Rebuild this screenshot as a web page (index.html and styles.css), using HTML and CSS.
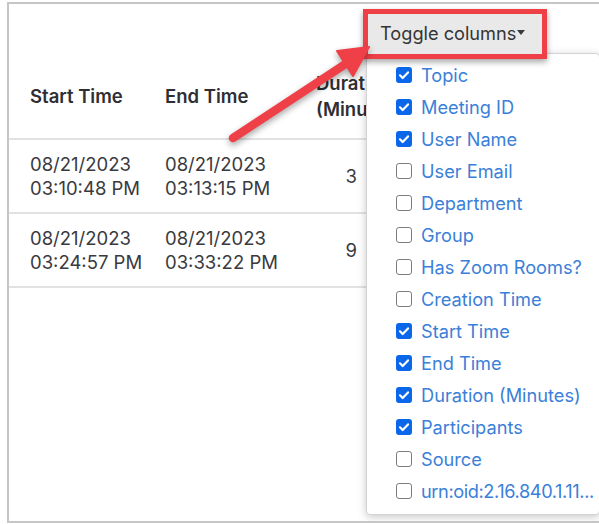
FILE: index.html
```html
<!DOCTYPE html>
<html lang="en">
<head>
<meta charset="utf-8">
<title>Meeting report</title>
<link rel="stylesheet" href="styles.css">
</head>
<body>
<div class="frame">
  <div class="toolbar">
    <div class="colmenu">
      <div class="callout">
        <button class="toggle" type="button">Toggle columns<span class="caret"></span></button>
      </div>
      <ul class="menu">
        <li><span class="box on"></span>Topic</li>
        <li><span class="box on"></span>Meeting ID</li>
        <li><span class="box on"></span>User Name</li>
        <li><span class="box"></span>User Email</li>
        <li><span class="box"></span>Department</li>
        <li><span class="box"></span>Group</li>
        <li><span class="box"></span>Has Zoom Rooms?</li>
        <li><span class="box"></span>Creation Time</li>
        <li><span class="box on"></span>Start Time</li>
        <li><span class="box on"></span>End Time</li>
        <li><span class="box on"></span>Duration (Minutes)</li>
        <li><span class="box on"></span>Participants</li>
        <li><span class="box"></span>Source</li>
        <li class="long"><span class="box"></span>urn:oid:2.16.840.1.11...</li>
      </ul>
    </div>
  </div>
  <table class="report">
    <colgroup>
      <col class="w-start">
      <col class="w-end">
      <col class="w-dur">
      <col>
    </colgroup>
    <thead>
      <tr>
        <th class="first">Start Time</th>
        <th>End Time</th>
        <th class="dur">Duration<br>(Minutes)</th>
        <th></th>
      </tr>
    </thead>
    <tbody>
      <tr>
        <td class="first">08/21/2023<br>03:10:48 PM</td>
        <td>08/21/2023<br>03:13:15 PM</td>
        <td class="num">3</td>
        <td></td>
      </tr>
      <tr>
        <td class="first">08/21/2023<br>03:24:57 PM</td>
        <td>08/21/2023<br>03:33:22 PM</td>
        <td class="num">9</td>
        <td></td>
      </tr>
    </tbody>
  </table>
  <!-- annotation arrow pointing at the toggle button -->
  <svg class="pointer" width="599" height="524" viewBox="0 0 599 524" aria-hidden="true">
    <line x1="233" y1="138" x2="350" y2="61" stroke="#ef3f47" stroke-width="8.5" stroke-linecap="round"/>
    <polygon points="369,47 337,51 353,76" fill="#ef3f47" stroke="#ef3f47" stroke-width="2" stroke-linejoin="round"/>
  </svg>
</div>
</body>
</html>
```

FILE: styles.css
```css
html, body {
  margin: 0;
  padding: 0;
  background: #ffffff;
}

body {
  width: 599px;
  height: 524px;
  overflow: hidden;
  font-family: Inter, "Liberation Sans", Arial, sans-serif;
  color: #3a3a3e;
}

.frame {
  position: relative;
  margin: 2px 0 0 7px;
  width: 592px;
  height: 521px;
  box-sizing: border-box;
  border: 2px solid #c6c6c6;
  border-right: none;
  overflow: hidden;
}

/* toolbar with the column toggle */
.toolbar {
  height: 49px;
  padding-top: 5px;
  box-sizing: border-box;
  display: flex;
  padding-left: 354px;
}

.colmenu {
  position: relative;
  z-index: 3;
}

.callout {
  position: relative;
  z-index: 2;
  border: 5px solid #ef3f47;
  box-shadow: 0 3px 6px rgba(0, 0, 0, 0.35);
}

.toggle {
  display: flex;
  align-items: center;
  width: 174px;
  height: 40px;
  margin: 0;
  padding: 0 0 3px 12px;
  box-sizing: border-box;
  border: none;
  background: #e9e9e9;
  font-family: inherit;
  font-size: 18.2px;
  color: #343434;
  cursor: pointer;
}

.caret {
  display: inline-block;
  margin-left: 1px;
  width: 0;
  height: 0;
  border-left: 4.5px solid transparent;
  border-right: 4.5px solid transparent;
  border-top: 5px solid #3a3a3a;
}

/* dropdown with column checkboxes */
.menu {
  position: absolute;
  z-index: 1;
  top: 44px;
  left: 3px;
  width: 234px;
  height: 462px;
  box-sizing: border-box;
  margin: 0;
  padding: 5px 0 9px 29px;
  list-style: none;
  background: #ffffff;
  border: 1px solid #d4d4d4;
  border-radius: 4px;
  box-shadow: 0 2px 8px rgba(0, 0, 0, 0.22);
}

.menu li {
  display: flex;
  align-items: center;
  gap: 9px;
  height: 32px;
  font-size: 18.2px;
  color: #3b80d8;
  white-space: nowrap;
}

.menu li.long {
  letter-spacing: -0.4px;
}

.box {
  flex: none;
  width: 16px;
  height: 16px;
  box-sizing: border-box;
  border: 1.5px solid #7d7d7d;
  border-radius: 3px;
  background: #ffffff;
}

.box.on {
  border: none;
  background: #0b67ea url("data:image/svg+xml;utf8,<svg xmlns='http://www.w3.org/2000/svg' width='16' height='16'><path d='M4 8.3l2.7 2.7 5.3-5.6' fill='none' stroke='white' stroke-width='2.2' stroke-linecap='round' stroke-linejoin='round'/></svg>") center / 16px 16px no-repeat;
}

/* report table */
.report {
  width: 100%;
  border-collapse: collapse;
  font-size: 18.5px;
  table-layout: fixed;
}

.w-start { width: 156px; }
.w-end   { width: 151px; }
.w-dur   { width: 56px; }

.report th,
.report td {
  box-sizing: border-box;
  padding: 0;
  vertical-align: middle;
  border-bottom: 2px solid #e2e2e2;
  white-space: nowrap;
}

.report th {
  height: 86px;
  text-align: left;
  font-weight: 600;
  color: #2e2e33;
  line-height: 26px;
}

.report td {
  height: 74px;
  line-height: 24px;
}

.report .first {
  padding-left: 21px;
}

.report .num {
  text-align: right;
  padding-right: 15px;
}

/* annotation overlay */
.pointer {
  position: absolute;
  z-index: 4;
  left: -9px;
  top: -4px;
  pointer-events: none;
  filter: drop-shadow(0 3px 3px rgba(0, 0, 0, 0.35));
}
```
